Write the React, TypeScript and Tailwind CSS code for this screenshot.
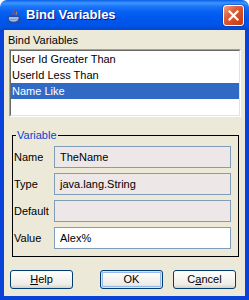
import React from "react";

const ITEMS = ["User Id Greater Than", "UserId Less Than", "Name Like"];

const FIELDS = [
  { label: "Name", value: "TheName", disabled: true },
  { label: "Type", value: "java.lang.String", disabled: true },
  { label: "Default", value: "", disabled: true },
  { label: "Value", value: "Alex%", disabled: false },
];

function JavaIcon() {
  return (
    <svg width="17" height="17" viewBox="0 0 16 16">
      <path d="M8.5 0.5 C6.2 2.6 9.6 3.9 7.3 6.4 C6.8 7.1 7.3 7.9 7.9 8.3 C5.9 7.7 5.3 6.5 6.4 5.1 C7.5 3.7 7.2 2.2 8.5 0.5 Z" fill="#d9381e" />
      <path d="M10.8 2.8 C9.4 4.2 11.2 5.1 9.9 6.7 C9.5 7.2 9.8 7.8 10.3 8.1 C8.9 7.7 8.6 6.8 9.3 5.8 C10 4.8 9.9 3.8 10.8 2.8 Z" fill="#f08a24" />
      <path d="M2.2 8.8 H12.2 V10.6 C12.2 13.1 10.1 14.4 7.2 14.4 C4.3 14.4 2.2 13.1 2.2 10.6 Z" fill="#fff" stroke="#1f4ea8" strokeWidth="1.1" />
      <path d="M2.8 10.4 H11.6 M3.2 12.1 H11.2" stroke="#4a7bd4" strokeWidth="1" />
      <path d="M12.2 9.4 C14.6 9.2 14.9 12.2 12.2 12.6" fill="none" stroke="#1f4ea8" strokeWidth="1.1" />
      <ellipse cx="7.3" cy="15" rx="6.6" ry="0.9" fill="none" stroke="#1f4ea8" strokeWidth="1" />
    </svg>
  );
}

function CloseButton() {
  return (
    <div className="w-[21px] h-[21px] rounded-[3px] border border-white bg-[linear-gradient(135deg,#f0a58c_0%,#e0603c_35%,#d2491f_70%,#c23c14_100%)] flex items-center justify-center shadow-[0_0_0_1px_rgba(0,40,160,0.35)]">
      <svg width="11" height="11" viewBox="0 0 11 11">
        <path d="M1.5 1.5 L9.5 9.5 M9.5 1.5 L1.5 9.5" stroke="#fff" strokeWidth="2.2" strokeLinecap="square" />
      </svg>
    </div>
  );
}

function XpButton({ children, isDefault }: { children: React.ReactNode; isDefault?: boolean }) {
  return (
    <button
      className={
        "w-[63px] h-[19px] rounded-[3px] border border-[#003c74] bg-[linear-gradient(to_bottom,#ffffff_0%,#f4f3ee_50%,#ecebe6_80%,#d6d0c5_100%)] text-[11px] leading-[17px] text-black " +
        (isDefault ? "shadow-[inset_0_0_0_1px_#cee7ff,inset_0_0_0_2px_#98b8ea]" : "")
      }
    >
      {children}
    </button>
  );
}

export default function App() {
  return (
    <div className="w-[249px] h-[300px] flex flex-col bg-white font-['Liberation_Sans',Arial,sans-serif]">
      {/* Title bar */}
      <div className="h-[30px] rounded-t-[7px] bg-[linear-gradient(to_bottom,#0a5fe6_0%,#3d95ff_10%,#1b74f8_22%,#0661f2_40%,#0058ee_60%,#0054e6_85%,#0047d1_100%)] flex items-center pl-[6px] pr-[5px]">
        <JavaIcon />
        <span className="ml-[3px] text-white font-bold text-[13px] [text-shadow:1px_1px_0_#0a1a8c]">
          Bind Variables
        </span>
        <div className="ml-auto">
          <CloseButton />
        </div>
      </div>

      {/* Body */}
      <div className="flex-1 flex flex-col border-x-4 border-b-4 border-[#0842d8] bg-[#ece9d8] text-[11px] text-black">
        <div className="pt-[4px] pl-[4px] h-[17px] leading-[13px]">Bind Variables</div>
        <div className="mt-[2px] ml-[5px] mr-[4px] h-[68px] border-t border-l border-[#a0a0a0] border-r border-b border-r-white border-b-white">
          <div className="h-full border-t border-l border-[#696969] border-r border-b border-r-[#e3e3e3] border-b-[#e3e3e3] bg-white">
            {ITEMS.map((item, i) => (
              <div
                key={item}
                className={
                  "h-[16px] leading-[16px] pl-[1px] " +
                  (i === 2 ? "bg-[#316ac5] text-white" : "")
                }
              >
                {item}
              </div>
            ))}
          </div>
        </div>

        <fieldset className="mt-[12px] ml-[8px] mr-[6px] border border-black pt-[4px] pb-[7px] pr-[7px]">
          <legend className="ml-[3px] px-[1px] text-[#0046d5] leading-[13px]">Variable</legend>
          <div className="flex flex-col gap-[5px]">
            {FIELDS.map((f) => (
              <div key={f.label} className="flex items-center h-[22px]">
                <div className="w-[41px] pl-[1px]">{f.label}</div>
                <div
                  className={
                    "flex-1 h-[22px] border border-[#7f9db9] pl-[5px] leading-[20px] " +
                    (f.disabled ? "bg-[#eee7e7]" : "bg-white")
                  }
                >
                  {f.value}
                </div>
              </div>
            ))}
          </div>
        </fieldset>

        <div className="mt-[13px] flex items-center pl-[6px] pr-[9px]">
          <XpButton>
            <span className="underline">H</span>elp
          </XpButton>
          <div className="ml-auto flex gap-[10px]">
            <XpButton isDefault>OK</XpButton>
            <XpButton>
              C<span className="underline">a</span>ncel
            </XpButton>
          </div>
        </div>
      </div>
    </div>
  );
}
